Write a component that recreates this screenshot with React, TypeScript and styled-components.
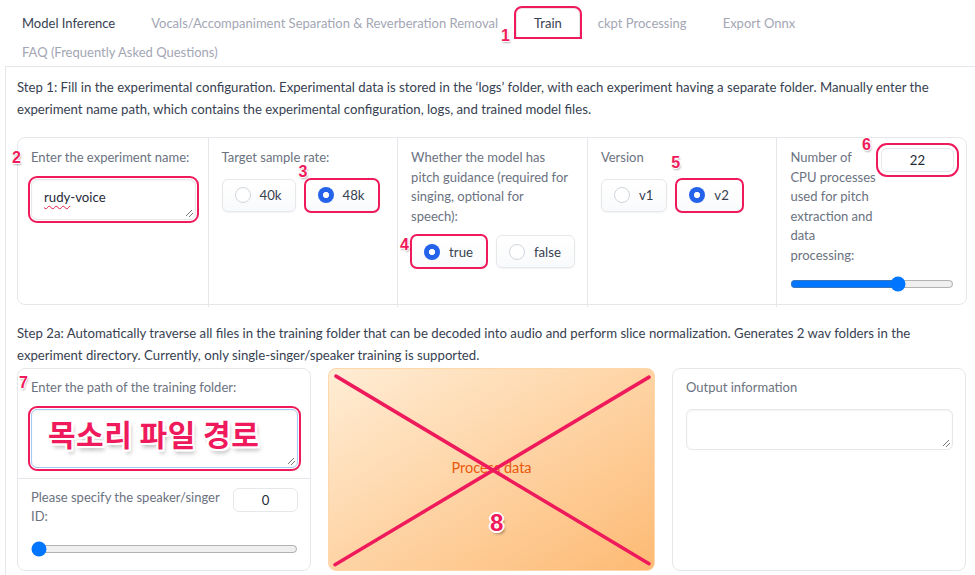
import styled, { createGlobalStyle, css } from "styled-components";
import type { ReactNode } from "react";

const MARK = "#ef1a5b";

const GlobalStyle = createGlobalStyle`
  html, body {
    margin: 0;
    padding: 0;
    background: #ffffff;
    overflow: hidden;
  }
  body {
    font-family: Lato, "Noto Sans", "Noto Sans CJK KR", sans-serif;
    color: #374151;
  }
  * {
    box-sizing: border-box;
  }
`;

const Page = styled.div`
  width: 990px;
  padding-top: 8px;
`;

/* ---------- tabs ---------- */

const TabBar = styled.div`
  display: flex;
  flex-wrap: wrap;
  padding-left: 4px;
  width: 975px;
`;

const Tab = styled.div<{ selected?: boolean; dark?: boolean }>`
  position: relative;
  height: 29px;
  line-height: 29px;
  padding: 0 17px;
  font-size: 13px;
  color: ${({ dark, selected }) => (dark || selected ? "#374151" : "#a3a6b4")};
  border: 1px solid transparent;
  border-bottom: none;
  border-radius: 6px 6px 0 0;
  ${({ selected }) =>
    selected &&
    css`
      border-color: #e5e7eb;
      background: #ffffff;
      outline: 2px solid ${MARK};
      outline-offset: 0px;
    `}
`;

const TabPanel = styled.div`
  margin-left: 5px;
  border-top: 1px solid #e5e7eb;
  border-left: 1px solid #e5e7eb;
  padding: 9px 12px 12px 11px;
  display: flex;
  flex-direction: column;
`;

const StepText = styled.p`
  margin: 0;
  font-size: 13.2px;
  line-height: 22px;
  color: #374151;
`;

/* ---------- step 1 ---------- */

const ConfigRow = styled.div`
  margin-top: 17px;
  margin-bottom: 17px;
  width: 950px;
  height: 168px;
  display: grid;
  grid-template-columns: repeat(5, 1fr);
  border: 1px solid #e5e7eb;
  border-radius: 8px;
`;

const Label = styled.span<{ narrow?: boolean }>`
  position: relative;
  display: block;
  font-size: 13px;
  line-height: 19.6px;
  color: #6b7280;
  ${({ narrow }) =>
    narrow &&
    css`
      width: 89px;
      flex-shrink: 0;
    `}
`;

const Cell = styled.div`
  position: relative;
  padding: 10px 12px 12px 13px;
  display: flex;
  flex-direction: column;
  & + & {
    border-left: 1px solid #e5e7eb;
  }
  & > ${Label} {
    max-width: 160px;
  }
`;

const TextBox = styled.div<{ height: number; focused?: boolean; marked?: boolean }>`
  position: relative;
  margin-top: 11px;
  height: ${({ height }) => height}px;
  border: 1px solid ${({ focused }) => (focused ? "#a5c8f5" : "#e5e7eb")};
  border-radius: 6px;
  background: #ffffff;
  box-shadow: inset 0 1px 2px rgba(0, 0, 0, 0.05);
  padding: 9px 12px;
  font-size: 13.2px;
  color: #1f2937;
  ${({ marked }) =>
    marked &&
    css`
      outline: 2px solid ${MARK};
      outline-offset: 1px;
    `}

  &::after {
    content: "";
    position: absolute;
    right: 2px;
    bottom: 2px;
    width: 7px;
    height: 7px;
    background: linear-gradient(
      135deg,
      transparent 40%,
      #777 40%,
      #777 48%,
      transparent 48%,
      transparent 70%,
      #777 70%,
      #777 78%,
      transparent 78%
    );
  }
`;

const Squiggle = styled.span`
  text-decoration: underline wavy #e11d48;
  text-decoration-thickness: 1px;
  text-underline-offset: 3px;
`;

const ChoiceRow = styled.div<{ top: number }>`
  display: flex;
  gap: 9px;
  margin-top: ${({ top }) => top}px;
`;

const Choice = styled.div<{ marked?: boolean }>`
  position: relative;
  display: flex;
  align-items: center;
  gap: 9px;
  height: 33px;
  padding: 0 13px 0 12px;
  border: 1px solid #e5e7eb;
  border-radius: 6px;
  background: linear-gradient(#ffffff, #f9fafb);
  box-shadow: 0 1px 2px rgba(0, 0, 0, 0.05);
  font-size: 13.2px;
  color: #374151;
  ${({ marked }) =>
    marked &&
    css`
      outline: 2px solid ${MARK};
      outline-offset: -1px;
    `}
`;

const RadioDot = styled.span<{ checked?: boolean }>`
  width: 16px;
  height: 16px;
  border-radius: 50%;
  flex-shrink: 0;
  ${({ checked }) =>
    checked
      ? css`
          background: radial-gradient(circle, #ffffff 0 2.8px, #2563eb 3.3px);
        `
      : css`
          border: 1px solid #d1d5db;
          background: #ffffff;
        `}
`;

const CpuHead = styled.div`
  display: flex;
  justify-content: space-between;
  align-items: flex-start;
`;

const NumberBox = styled.div<{ width: number; marked?: boolean }>`
  position: relative;
  width: ${({ width }) => width}px;
  height: 24px;
  line-height: 22px;
  text-align: center;
  border: 1px solid #e5e7eb;
  border-radius: 6px;
  background: #ffffff;
  font-size: 13.2px;
  color: #1f2937;
  ${({ marked }) =>
    marked &&
    css`
      outline: 2px solid ${MARK};
      outline-offset: 3px;
    `}
`;

const Range = styled.input`
  width: 100%;
  margin: 0;
  accent-color: #0075ff;
`;

const SliderWrap = styled.div<{ top: number }>`
  margin-top: ${({ top }) => top}px;
`;

/* ---------- step 2a ---------- */

const BottomRow = styled.div`
  margin-top: 2px;
  display: grid;
  grid-template-columns: 294px 327px 294px;
  gap: 17px;
  height: 198px;
`;

const Block = styled.div`
  position: relative;
  border: 1px solid #e5e7eb;
  border-radius: 8px;
  display: flex;
  flex-direction: column;
`;

const BlockSection = styled.div<{ divided?: boolean }>`
  padding: 9px 12px 10px 13px;
  ${({ divided }) =>
    divided &&
    css`
      border-top: 1px solid #e5e7eb;
    `}
`;

const SpeakerHead = styled.div`
  display: flex;
  justify-content: space-between;
  align-items: flex-start;
  gap: 6px;
`;

const ProcessButton = styled.div`
  position: relative;
  display: flex;
  align-items: center;
  justify-content: center;
  padding-bottom: 4px;
  border: 1px solid #fed7aa;
  border-radius: 8px;
  background: linear-gradient(to bottom right, #ffedd5, #fdba74);
  color: #ea580c;
  font-size: 14.5px;
  overflow: hidden;
`;

const Cross = styled.svg`
  position: absolute;
  inset: 0;
  width: 100%;
  height: 100%;
`;

/* ---------- annotations ---------- */

const Marker = styled.span<{ x: number; y: number; big?: boolean }>`
  position: absolute;
  left: ${({ x }) => x}px;
  top: ${({ y }) => y}px;
  font-family: "Liberation Sans", Arial, sans-serif;
  font-weight: 700;
  font-size: ${({ big }) => (big ? 24 : 16)}px;
  line-height: 1;
  color: ${MARK};
  text-shadow: ${({ big }) =>
    big
      ? "-2px 0 #fff, 2px 0 #fff, 0 -2px #fff, 0 2px #fff, -1px -1px #fff, 1px 1px #fff, -1px 1px #fff, 1px -1px #fff, 2px 3px 3px rgba(0,0,0,0.35)"
      : "-1px 0 #fff, 1px 0 #fff, 0 -1px #fff, 0 1px #fff, 1px 2px 2px rgba(0,0,0,0.3)"};
  z-index: 3;
  pointer-events: none;
`;

const Callout = styled.span`
  position: absolute;
  left: 16px;
  top: 8px;
  font-family: "Noto Sans CJK KR", sans-serif;
  font-weight: 700;
  font-size: 30px;
  line-height: 1;
  letter-spacing: 0.5px;
  color: ${MARK};
  text-shadow: -2px 0 #fff, 2px 0 #fff, 0 -2px #fff, 0 2px #fff, -2px -2px #fff,
    2px 2px #fff, -2px 2px #fff, 2px -2px #fff, 2px 4px 4px rgba(0, 0, 0, 0.3);
`;

const tabs = [
  "Model Inference",
  "Vocals/Accompaniment Separation & Reverberation Removal",
  "Train",
  "ckpt Processing",
  "Export Onnx",
  "FAQ (Frequently Asked Questions)",
];

function Radio({
  label,
  checked,
  marked,
  children,
}: {
  label: string;
  checked?: boolean;
  marked?: boolean;
  children?: ReactNode;
}) {
  return (
    <Choice marked={marked}>
      <RadioDot checked={checked} />
      {label}
      {children}
    </Choice>
  );
}

export default function App() {
  return (
    <Page>
      <GlobalStyle />
      <TabBar>
        {tabs.map((t, i) => (
          <Tab key={t} selected={t === "Train"} dark={i === 0}>
            {t}
            {t === "Train" && <Marker x={-16} y={19}>1</Marker>}
          </Tab>
        ))}
      </TabBar>

      <TabPanel>
        <StepText>
          Step 1: Fill in the experimental configuration. Experimental data is stored in the
          ‘logs’ folder, with each experiment having a separate folder. Manually enter the
          experiment name path, which contains the experimental configuration, logs, and
          trained model files.
        </StepText>

        <ConfigRow>
          <Cell>
            <Label>
              <Marker x={-19} y={2}>2</Marker>
              Enter the experiment name:
            </Label>
            <TextBox height={41} marked>
              <Squiggle>rudy</Squiggle>-voice
            </TextBox>
          </Cell>

          <Cell>
            <Label>Target sample rate:</Label>
            <ChoiceRow top={11}>
              <Radio label="40k" />
              <Radio label="48k" checked marked>
                <Marker x={-7} y={-16}>3</Marker>
              </Radio>
            </ChoiceRow>
          </Cell>

          <Cell>
            <Label>
              Whether the model has pitch guidance (required for singing, optional for
              speech):
            </Label>
            <ChoiceRow top={9}>
              <Radio label="true" checked marked>
                <Marker x={-12} y={1}>4</Marker>
              </Radio>
              <Radio label="false" />
            </ChoiceRow>
          </Cell>

          <Cell>
            <Label>Version</Label>
            <ChoiceRow top={11}>
              <Radio label="v1" />
              <Radio label="v2" checked marked>
                <Marker x={-6} y={-25}>5</Marker>
              </Radio>
            </ChoiceRow>
          </Cell>

          <Cell>
            <CpuHead>
              <Label narrow>
                Number of CPU processes used for pitch extraction and data processing:
              </Label>
              <NumberBox width={73} marked>
                22
                <Marker x={-20} y={-12}>6</Marker>
              </NumberBox>
            </CpuHead>
            <SliderWrap top={10}>
              <Range type="range" min={1} max={32} defaultValue={22} />
            </SliderWrap>
          </Cell>
        </ConfigRow>

        <StepText>
          Step 2a: Automatically traverse all files in the training folder that can be decoded
          into audio and perform slice normalization. Generates 2 wav folders in the experiment
          directory. Currently, only single-singer/speaker training is supported.
        </StepText>

        <BottomRow>
          <Block>
            <Marker x={1} y={6}>7</Marker>
            <BlockSection>
              <Label>Enter the path of the training folder:</Label>
              <TextBox height={59} focused marked>
                <Callout>목소리 파일 경로</Callout>
              </TextBox>
            </BlockSection>
            <BlockSection divided>
              <SpeakerHead>
                <Label>Please specify the speaker/singer ID:</Label>
                <NumberBox width={69}>0</NumberBox>
              </SpeakerHead>
              <SliderWrap top={14}>
                <Range type="range" min={0} max={4} defaultValue={0} />
              </SliderWrap>
            </BlockSection>
          </Block>

          <ProcessButton>
            Process data
            <Cross viewBox="0 0 327 198" preserveAspectRatio="none">
              <line x1="7" y1="7" x2="322" y2="192" stroke={MARK} strokeWidth="3.5" strokeLinecap="round" />
              <line x1="322" y1="8" x2="6" y2="193" stroke={MARK} strokeWidth="3.5" strokeLinecap="round" />
            </Cross>
            <Marker x={161} y={142} big>8</Marker>
          </ProcessButton>

          <Block>
            <BlockSection>
              <Label>Output information</Label>
              <TextBox height={41} />
            </BlockSection>
          </Block>
        </BottomRow>
      </TabPanel>
    </Page>
  );
}
